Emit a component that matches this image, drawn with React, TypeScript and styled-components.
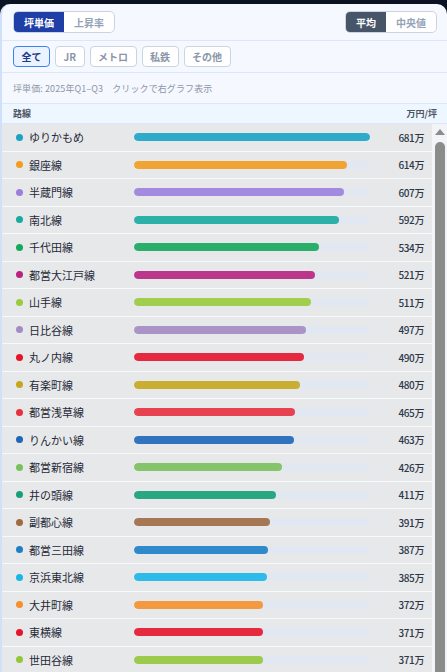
import React from "react";
import styled, { createGlobalStyle } from "styled-components";

const GlobalStyle = createGlobalStyle`
  html, body {
    margin: 0;
    padding: 0;
    overflow: hidden;
    background: #0b1222;
  }
  body {
    font-family: "Noto Sans CJK JP", "Noto Sans", sans-serif;
  }
`;

const Card = styled.div`
  margin-top: 4px;
  background: #f5f8fe;
  border-radius: 10px 10px 0 0;
  border-left: 2px solid #cfe0f8;
  overflow: hidden;
`;

const Section = styled.div<{ $h: number }>`
  height: ${(p) => p.$h}px;
  box-sizing: border-box;
  display: flex;
  align-items: center;
  justify-content: space-between;
  padding: 0 10px 0 11px;
  border-bottom: 1px solid #dbe8fa;
`;

const Segmented = styled.div`
  display: flex;
  border: 1px solid #cbd5e1;
  border-radius: 5px;
  overflow: hidden;
  background: #fff;
  height: 22px;
  box-sizing: border-box;
`;

const SegButton = styled.div<{ $active?: boolean; $tone: string; $w: number }>`
  width: ${(p) => p.$w}px;
  display: flex;
  align-items: center;
  justify-content: center;
  font-size: 10px;
  font-weight: 700;
  color: ${(p) => (p.$active ? "#fff" : "#94a3b8")};
  background: ${(p) => (p.$active ? p.$tone : "transparent")};
`;

const Chips = styled.div`
  display: flex;
  gap: 5px;
`;

const Chip = styled.div<{ $active?: boolean }>`
  height: 21px;
  box-sizing: border-box;
  padding: 0 7.5px;
  display: flex;
  align-items: center;
  border-radius: 4px;
  font-size: 10px;
  font-weight: 700;
  border: 1px solid ${(p) => (p.$active ? "#3b82f6" : "#cbd5e1")};
  background: ${(p) => (p.$active ? "#eaf3ff" : "#fff")};
  color: ${(p) => (p.$active ? "#1e3a8a" : "#8a96a8")};
`;

const Info = styled.div`
  font-size: 9px;
  color: #8d97a8;
  letter-spacing: 0.1px;
`;

const ColHead = styled.div`
  height: 20px;
  box-sizing: border-box;
  display: flex;
  align-items: center;
  justify-content: space-between;
  padding: 0 10px 0 11px;
  background: #eef6ff;
  border-bottom: 1px solid #dbe8fa;
  font-size: 9px;
  font-weight: 600;
  color: #4b5563;
`;

const Body = styled.div`
  display: flex;
  height: 620px;
`;

const List = styled.div`
  flex: 1;
  overflow: hidden;
`;

const Rail = styled.div`
  width: 15px;
  flex: none;
  background: #f2f4f7;
  display: flex;
  flex-direction: column;
  align-items: center;
`;

const Arrow = styled.div`
  width: 0;
  height: 0;
  margin-top: 5px;
  border-left: 5.5px solid transparent;
  border-right: 5.5px solid transparent;
  border-bottom: 6px solid #8b8b8b;
`;

const Thumb = styled.div`
  width: 10px;
  margin-top: 7px;
  flex: 1;
  background: #8b8b8b;
  border-radius: 5px;
`;

const Row = styled.div`
  height: 27.5px;
  box-sizing: border-box;
  display: flex;
  align-items: center;
  background: #e7e8ea;
  border-bottom: 1px solid #f7f8fa;
  padding: 0 8px 0 14px;
`;

const Dot = styled.span<{ $c: string }>`
  width: 7px;
  height: 7px;
  border-radius: 50%;
  background: ${(p) => p.$c};
  flex: none;
`;

const Name = styled.span`
  width: 105px;
  padding-left: 6px;
  flex: none;
  font-size: 11px;
  font-weight: 400;
  color: #1f2937;
  white-space: nowrap;
`;

const Track = styled.div`
  width: 236px;
  height: 8px;
  border-radius: 4px;
  background: #e1e8f1;
  flex: none;
  overflow: hidden;
`;

const Fill = styled.div<{ $c: string }>`
  height: 100%;
  border-radius: 4px;
  background: ${(p) => p.$c};
  opacity: 0.9;
`;

const Value = styled.span`
  flex: 1;
  text-align: right;
  font-size: 10px;
  font-weight: 500;
  color: #2d3748;
  letter-spacing: -0.4px;
`;

const lines: [string, string, number][] = [
  ["ゆりかもめ", "#1ba3c6", 681],
  ["銀座線", "#f39c1e", 614],
  ["半蔵門線", "#9b7fdc", 607],
  ["南北線", "#17ab9e", 592],
  ["千代田線", "#16a85c", 534],
  ["都営大江戸線", "#b8237f", 521],
  ["山手線", "#9acb3a", 511],
  ["日比谷線", "#a48bc2", 497],
  ["丸ノ内線", "#e6142a", 490],
  ["有楽町線", "#c6a71c", 480],
  ["都営浅草線", "#e8303e", 465],
  ["りんかい線", "#1e66b8", 463],
  ["都営新宿線", "#7ac15c", 426],
  ["井の頭線", "#15a077", 411],
  ["副都心線", "#a06a43", 391],
  ["都営三田線", "#1b7fc6", 387],
  ["京浜東北線", "#1ab6e8", 385],
  ["大井町線", "#f5902e", 372],
  ["東横線", "#e6142a", 371],
  ["世田谷線", "#93c63a", 371],
  ["池上線", "#e85298", 362],
  ["目黒線", "#1a9bd6", 355],
];

const max = 681;

export default function App() {
  return (
    <>
      <GlobalStyle />
      <Card>
        <Section $h={37}>
          <Segmented>
            <SegButton $active $tone="#1f3ea6" $w={50}>坪単価</SegButton>
            <SegButton $tone="#1f3ea6" $w={50}>上昇率</SegButton>
          </Segmented>
          <Segmented>
            <SegButton $active $tone="#475569" $w={40}>平均</SegButton>
            <SegButton $tone="#475569" $w={50}>中央値</SegButton>
          </Segmented>
        </Section>
        <Section $h={32}>
          <Chips>
            <Chip $active>全て</Chip>
            <Chip>JR</Chip>
            <Chip>メトロ</Chip>
            <Chip>私鉄</Chip>
            <Chip>その他</Chip>
          </Chips>
        </Section>
        <Section $h={31}>
          <Info>坪単価: 2025年Q1–Q3　クリックで右グラフ表示</Info>
        </Section>
        <ColHead>
          <span>路線</span>
          <span>万円/坪</span>
        </ColHead>
        <Body>
          <List>
            {lines.map(([name, color, v]) => (
              <Row key={name}>
                <Dot $c={color} />
                <Name>{name}</Name>
                <Track>
                  <Fill $c={color} style={{ width: `${(v / max) * 100}%` }} />
                </Track>
                <Value>{v}万</Value>
              </Row>
            ))}
          </List>
          <Rail>
            <Arrow />
            <Thumb />
          </Rail>
        </Body>
      </Card>
    </>
  );
}
